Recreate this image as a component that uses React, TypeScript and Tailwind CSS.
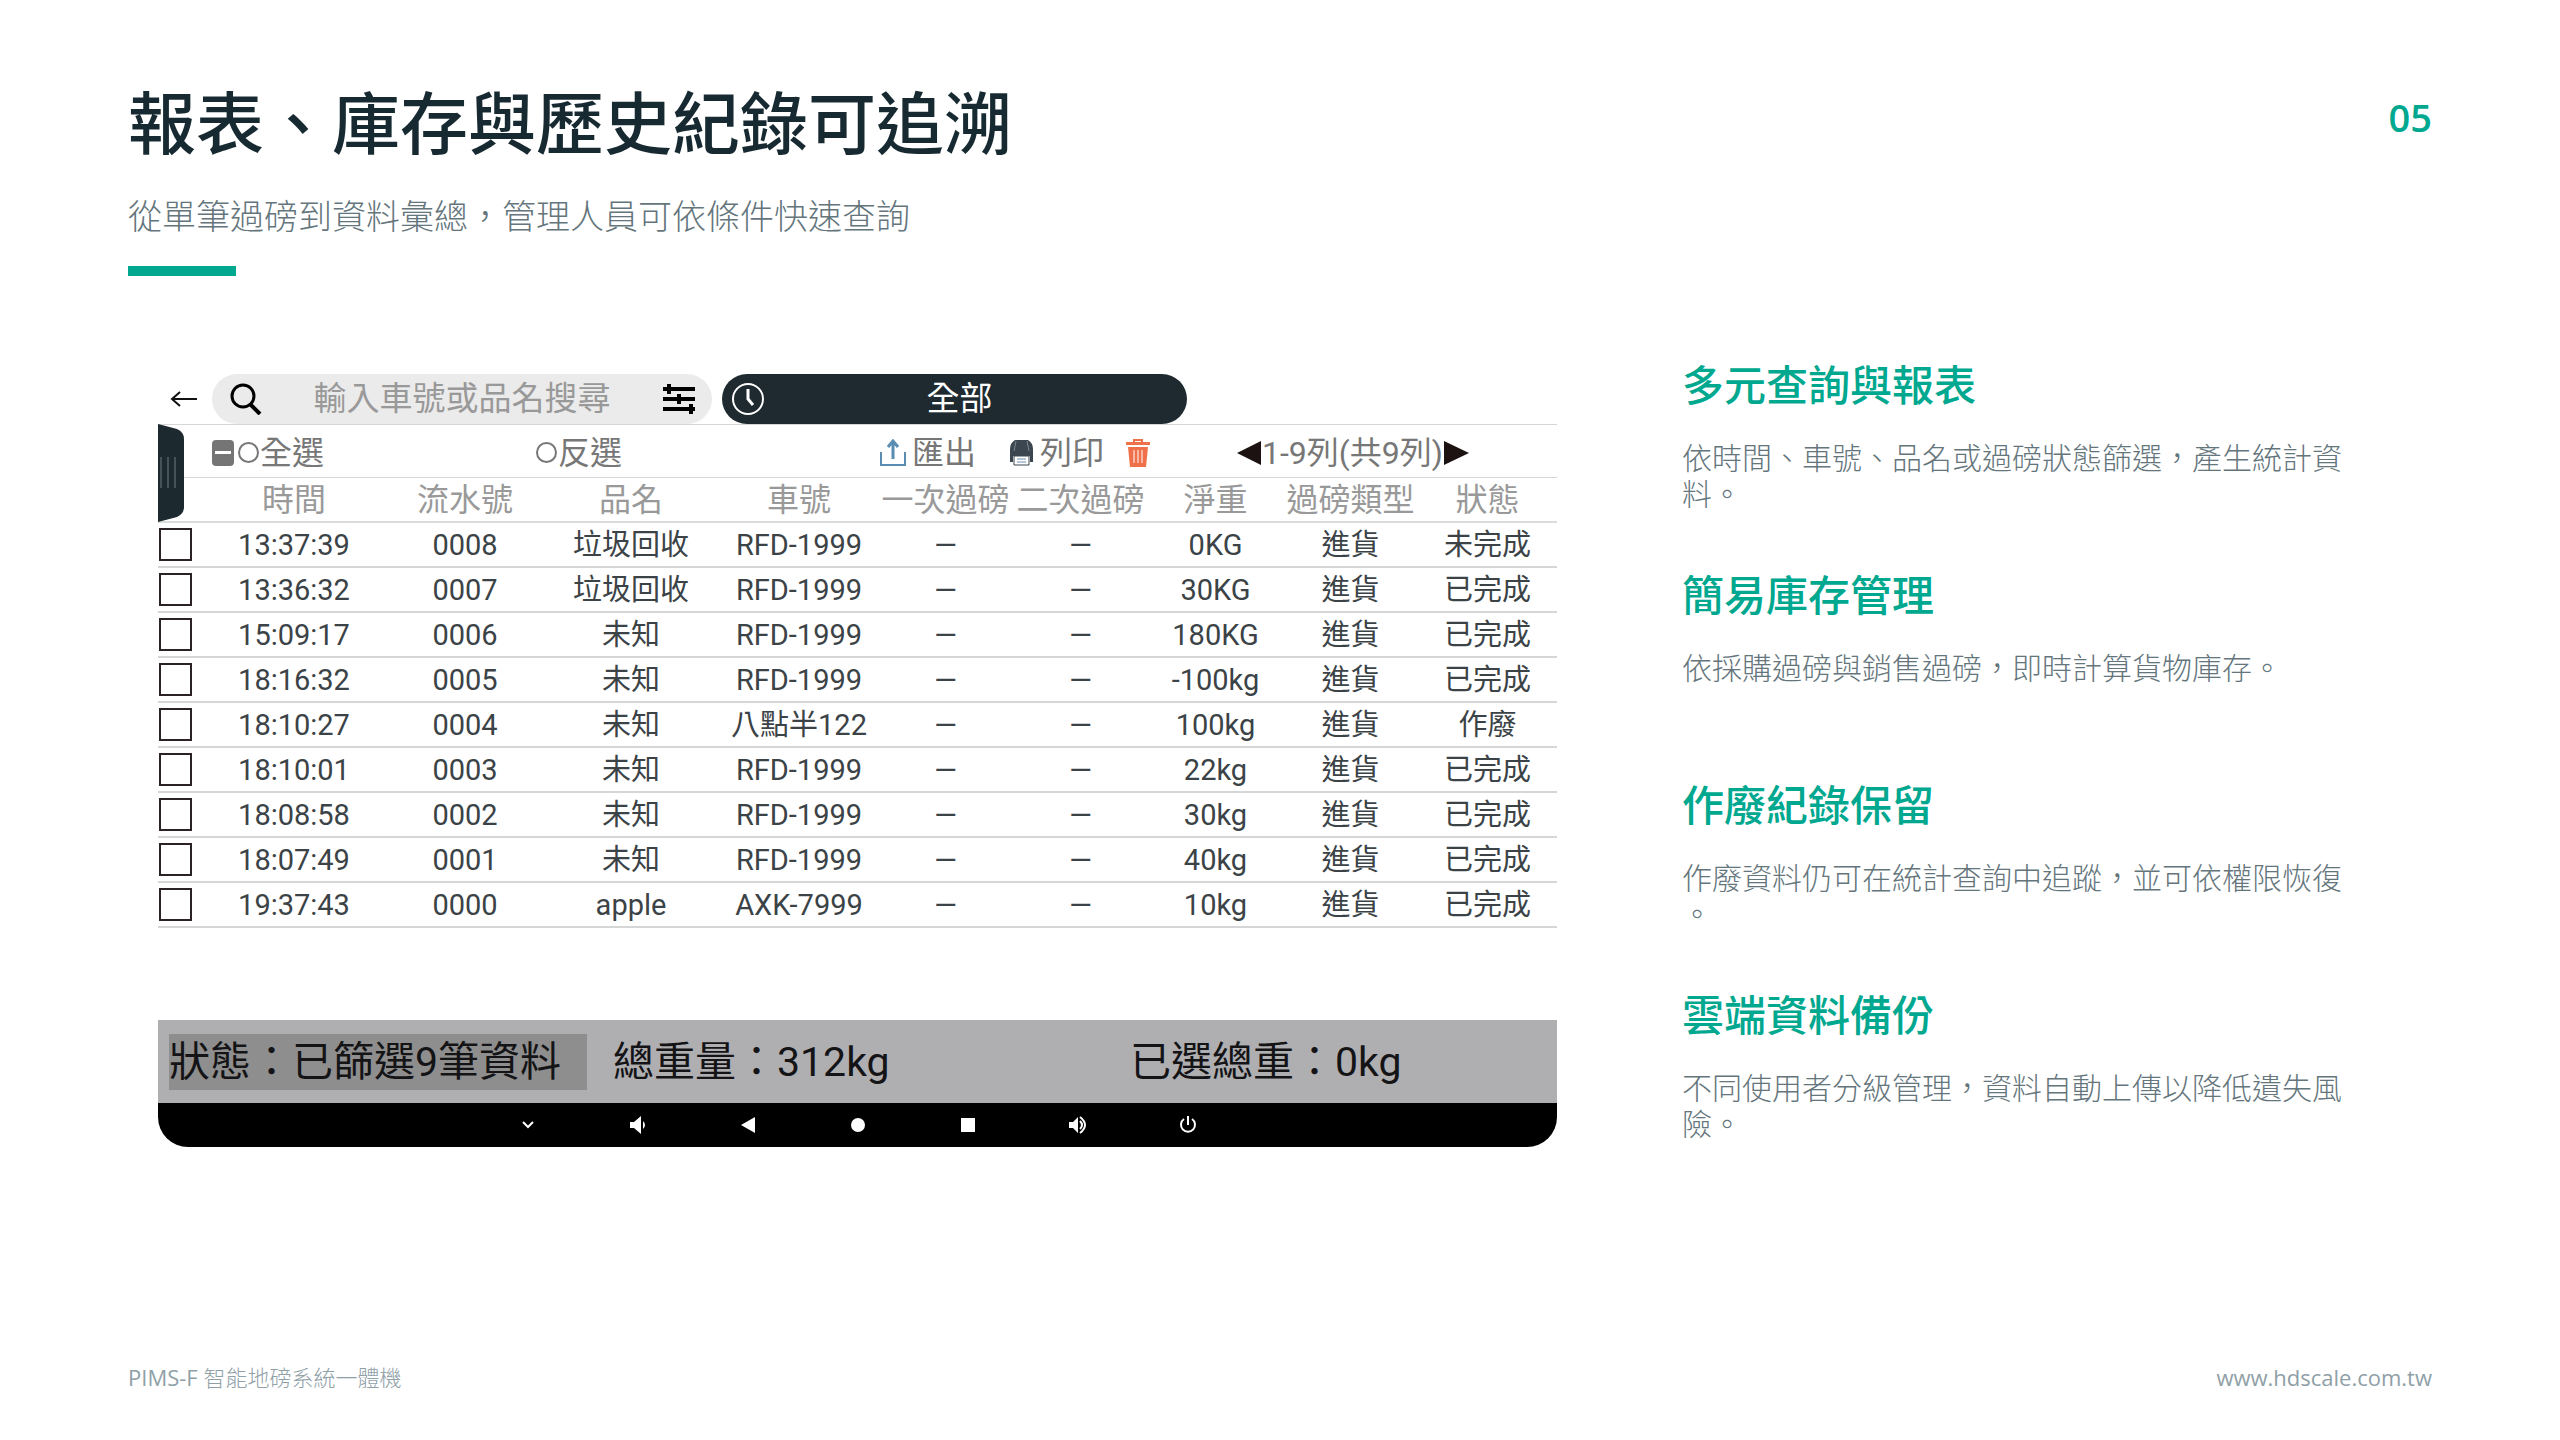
import React from "react";

type RecordRow = {
  time: string;
  serial: string;
  product: string;
  plate: string;
  net: string;
  type: string;
  status: string;
};

const records: RecordRow[] = [
  { time: "13:37:39", serial: "0008", product: "垃圾回收", plate: "RFD-1999", net: "0KG", type: "進貨", status: "未完成" },
  { time: "13:36:32", serial: "0007", product: "垃圾回收", plate: "RFD-1999", net: "30KG", type: "進貨", status: "已完成" },
  { time: "15:09:17", serial: "0006", product: "未知", plate: "RFD-1999", net: "180KG", type: "進貨", status: "已完成" },
  { time: "18:16:32", serial: "0005", product: "未知", plate: "RFD-1999", net: "-100kg", type: "進貨", status: "已完成" },
  { time: "18:10:27", serial: "0004", product: "未知", plate: "八點半122", net: "100kg", type: "進貨", status: "作廢" },
  { time: "18:10:01", serial: "0003", product: "未知", plate: "RFD-1999", net: "22kg", type: "進貨", status: "已完成" },
  { time: "18:08:58", serial: "0002", product: "未知", plate: "RFD-1999", net: "30kg", type: "進貨", status: "已完成" },
  { time: "18:07:49", serial: "0001", product: "未知", plate: "RFD-1999", net: "40kg", type: "進貨", status: "已完成" },
  { time: "19:37:43", serial: "0000", product: "apple", plate: "AXK-7999", net: "10kg", type: "進貨", status: "已完成" },
];

const columns = ["時間", "流水號", "品名", "車號", "一次過磅", "二次過磅", "淨重", "過磅類型", "狀態"];

const features = [
  { title: "多元查詢與報表", text: "依時間、車號、品名或過磅狀態篩選，產生統計資料。" },
  { title: "簡易庫存管理", text: "依採購過磅與銷售過磅，即時計算貨物庫存。" },
  { title: "作廢紀錄保留", text: "作廢資料仍可在統計查詢中追蹤，並可依權限恢復。" },
  { title: "雲端資料備份", text: "不同使用者分級管理，資料自動上傳以降低遺失風險。" },
];

const SearchBar = () => {
  return (
    <div className="grid grid-cols-[44fr_500fr_465fr_360fr] gap-x-[10px] h-[50px]">
      <button type="button" aria-label="返回" className="flex items-center justify-end pr-1">
        <svg width="28" height="20" viewBox="0 0 28 20" fill="none" stroke="#111" strokeWidth="2">
          <path d="M27 10H2M10 3L2 10l8 7" />
        </svg>
      </button>
      <div className="flex min-w-0 items-center rounded-full bg-[#ebebeb] pl-[18px] pr-4">
        <svg width="32" height="32" viewBox="0 0 32 32" fill="none" stroke="#000" strokeWidth="3">
          <circle cx="13" cy="13" r="11" />
          <path d="M20 21l10 10" strokeWidth="4" />
        </svg>
        <input
          type="text"
          aria-label="搜尋"
          placeholder="輸入車號或品名搜尋"
          className="min-w-0 flex-1 bg-transparent text-center text-[33px] leading-[50px] text-[#555] placeholder:text-[#999] focus:outline-none"
        />
        <svg width="34" height="32" viewBox="0 0 34 32" stroke="#000" strokeWidth="4">
          <path d="M1 6h32M1 16h32M1 26h32" />
          <path d="M7 1v10M17 11v10M29 21v10" />
        </svg>
      </div>
      <button type="button" className="flex items-center rounded-full bg-[#1e2a30] pl-[10px] pr-8 text-[33px] leading-[50px] text-white">
        <svg width="32" height="32" viewBox="0 0 32 32" fill="none" stroke="#fff" strokeWidth="2">
          <circle cx="16" cy="16" r="15" />
          <path d="M16 6v10l5 6" strokeWidth="3" />
        </svg>
        <span className="flex-1">全部</span>
      </button>
    </div>
  );
};

const Toolbar = () => {
  return (
    <div className="grid grid-cols-[324fr_344fr_129fr_117fr_111fr_320fr] items-center h-[54px] pl-[54px] pt-[3px] border-y border-[#d6d6d6] text-[32px] leading-[48px] text-[#777]">
      <div className="flex items-center">
        <button type="button" aria-label="取消選取" className="mr-1 flex h-[26px] w-[22px] items-center justify-center rounded-[4px] bg-[#757575]">
          <span className="h-[3px] w-4 bg-white" />
        </button>
        <label className="flex items-center gap-px">
          <input type="radio" name="pick" className="h-[21px] w-[21px] appearance-none rounded-full border-2 border-[#777]" />
          全選
        </label>
      </div>
      <label className="flex items-center gap-px">
        <input type="radio" name="pick" className="h-[21px] w-[21px] appearance-none rounded-full border-2 border-[#777]" />
        反選
      </label>
      <button type="button" className="flex items-center gap-[6px]">
        <svg width="26" height="28" viewBox="0 0 26 28" fill="none" stroke="#5b8db3" strokeWidth="2">
          <path d="M1 13v13h24V13" />
          <path d="M13 20V3M8 8l5-6 5 6" strokeWidth="3" />
        </svg>
        匯出
      </button>
      <button type="button" className="flex items-center gap-[6px]">
        <svg width="25" height="28" viewBox="0 0 25 28">
          <path d="M6 1h13q5 3 5 9v13h-3v-6H4v6H1V10q0-6 5-9z" fill="#3c4650" />
          <path d="M7 2L5 12M18 2l2 10" stroke="#7d8790" />
          <path d="M5 17h15v9H5z" fill="#fff" stroke="#3c4650" />
          <path d="M8 20h9M8 23h9" stroke="#6c8fb0" />
        </svg>
        列印
      </button>
      <button type="button" aria-label="刪除" className="flex items-center">
        <svg width="24" height="30" viewBox="0 0 24 30" fill="#f0704a">
          <path d="M7 4V1h10v3h7v3H0V4zM9 3v1h6V3z" fillRule="evenodd" />
          <path d="M2 9h20l-2 20H4z" />
          <path d="M8 12v13M12 12v13M16 12v13" stroke="#fff" strokeWidth="1" />
        </svg>
      </button>
      <div className="flex items-center gap-px">
        <button type="button" aria-label="上一頁">
          <svg width="24" height="24" viewBox="0 0 24 24" fill="#1c1212">
            <path d="M24 0v24L0 12z" />
          </svg>
        </button>
        <span className="whitespace-nowrap">1-9列(共9列)</span>
        <button type="button" aria-label="下一頁">
          <svg width="25" height="24" viewBox="0 0 25 24" fill="#1c1212">
            <path d="M0 0v24l25-12z" />
          </svg>
        </button>
      </div>
    </div>
  );
};

const RecordTable = () => {
  return (
    <table className="w-full table-fixed border-collapse text-center text-[29px] text-[#3b4347]">
      <colgroup>
        <col className="w-[42px]" />
        <col className="w-[188px]" />
        <col className="w-[154px]" />
        <col className="w-[178px]" />
        <col className="w-[158px]" />
        <col className="w-[135px]" />
        <col className="w-[135px]" />
        <col className="w-[135px]" />
        <col className="w-[135px]" />
        <col className="w-[139px]" />
      </colgroup>
      <thead>
        <tr className="h-[44px] border-b-2 border-[#dcdcdc] text-[32px] leading-[42px] text-[#999]">
          <th aria-label="選取" />
          {columns.map((name) => (
            <th key={name} className="whitespace-nowrap font-normal">
              {name}
            </th>
          ))}
        </tr>
      </thead>
      <tbody>
        {records.map((item) => (
          <tr key={item.serial} className="h-[45px] border-b-2 border-[#d6d6d6] leading-[42px]">
            <td className="pl-px">
              <input
                type="checkbox"
                aria-label={item.serial}
                className="block h-[33px] w-[33px] appearance-none border-2 border-[#2a2224] bg-white"
              />
            </td>
            <td>{item.time}</td>
            <td>{item.serial}</td>
            <td>{item.product}</td>
            <td>{item.plate}</td>
            <td>—</td>
            <td>—</td>
            <td>{item.net}</td>
            <td>{item.type}</td>
            <td>{item.status}</td>
          </tr>
        ))}
      </tbody>
    </table>
  );
};

const NavBar = () => {
  return (
    <nav className="flex h-11 items-center justify-center rounded-b-[30px] bg-black">
      <button type="button" aria-label="收起" className="flex w-[110px] justify-center">
        <svg width="12" height="8" viewBox="0 0 12 8" fill="none" stroke="#fff" strokeWidth="2">
          <path d="M1 1l5 5 5-5" />
        </svg>
      </button>
      <button type="button" aria-label="降低音量" className="flex w-[110px] justify-center">
        <svg width="16" height="18" viewBox="0 0 16 18" fill="#fff">
          <path d="M0 6h4l7-6v18l-7-6H0z" />
          <path d="M13 5q4 4 0 8z" />
        </svg>
      </button>
      <button type="button" aria-label="上一步" className="flex w-[110px] justify-center">
        <svg width="14" height="16" viewBox="0 0 14 16" fill="#fff">
          <path d="M14 0v16L0 8z" />
        </svg>
      </button>
      <button type="button" aria-label="主畫面" className="flex w-[110px] justify-center">
        <span className="h-[14px] w-[14px] rounded-full bg-white" />
      </button>
      <button type="button" aria-label="最近使用" className="flex w-[110px] justify-center">
        <span className="h-[14px] w-[14px] bg-white" />
      </button>
      <button type="button" aria-label="提高音量" className="flex w-[110px] justify-center">
        <svg width="18" height="18" viewBox="0 0 18 18" fill="#fff">
          <path d="M0 6h4l5-5v16l-5-5H0z" />
          <path d="M11 5q4 4 0 8M11 1q10 8 0 16" fill="none" stroke="#fff" strokeWidth="2" />
        </svg>
      </button>
      <button type="button" aria-label="電源" className="flex w-[110px] justify-center">
        <svg width="18" height="18" viewBox="0 0 18 18" fill="none" stroke="#fff" strokeWidth="2">
          <path d="M9 0v9M5 3a7 7 0 1 0 8 0" />
        </svg>
      </button>
    </nav>
  );
};

const Device = () => {
  return (
    <section className="mt-[14px] font-[Roboto,'Noto_Sans_CJK_TC',sans-serif]">
      <SearchBar />
      <div className="relative">
        <Toolbar />
        <RecordTable />
        {/* drawer handle */}
        <svg className="absolute left-0 top-0" width="26" height="98" viewBox="0 0 26 98">
          <path d="M0 0l19 5q7 3 7 10v68q0 7-7 10L0 98z" fill="#1c292f" />
          <path d="M3 33v31M10 33v31M17 33v31" stroke="#44525a" strokeWidth="2" />
        </svg>
      </div>
      <div className="mt-[92px] grid h-[83px] grid-cols-[418fr_543fr_427fr] items-center bg-[#afafb2] pl-[11px] text-[41px] leading-[56px] text-[#141416]">
        <span className="whitespace-nowrap bg-[#8e8e8e]">狀態：已篩選9筆資料</span>
        <span className="whitespace-nowrap pl-[26px]">總重量：312kg</span>
        <span className="whitespace-nowrap">已選總重：0kg</span>
      </div>
      <NavBar />
    </section>
  );
};

export default function App() {
  return (
    <div className="flex min-h-screen flex-col bg-white px-32 font-['Open_Sans','Noto_Sans_CJK_TC',sans-serif]">
      <header className="flex items-start justify-between pt-[83px]">
        <div>
          <h1 className="text-[68px] font-medium leading-[80px] text-[#172a32]">報表、庫存與歷史紀錄可追溯</h1>
          <p className="mt-[29px] text-[34px] font-light leading-[48px] text-[#64757c]">
            從單筆過磅到資料彙總，管理人員可依條件快速查詢
          </p>
          <div className="mt-[26px] h-[10px] w-[108px] bg-[#00a88f]" />
        </div>
        <span className="mt-2 text-[38px] font-semibold leading-[52px] text-[#00a88f]">05</span>
      </header>

      <main className="mt-[84px] grid grid-cols-[1399fr_670fr] gap-x-[125px] pl-[30px] pr-20">
        <Device />
        <div>
          {features.map((item) => (
            <article key={item.title} className="min-h-[210px]">
              <h2 className="text-[42px] font-medium leading-[50px] text-[#00a88f]">{item.title}</h2>
              <p className="mt-[30px] text-[30px] font-light leading-[36px] text-[#64757c] [line-break:anywhere]">{item.text}</p>
            </article>
          ))}
        </div>
      </main>

      <footer className="mt-auto flex justify-between pb-[47px] text-[22px] leading-[32px] text-[#8fa0a7]">
        <span>
          PIMS-F <span className="font-light">智能地磅系統一體機</span>
        </span>
        <a href="#">www.hdscale.com.tw</a>
      </footer>
    </div>
  );
}
